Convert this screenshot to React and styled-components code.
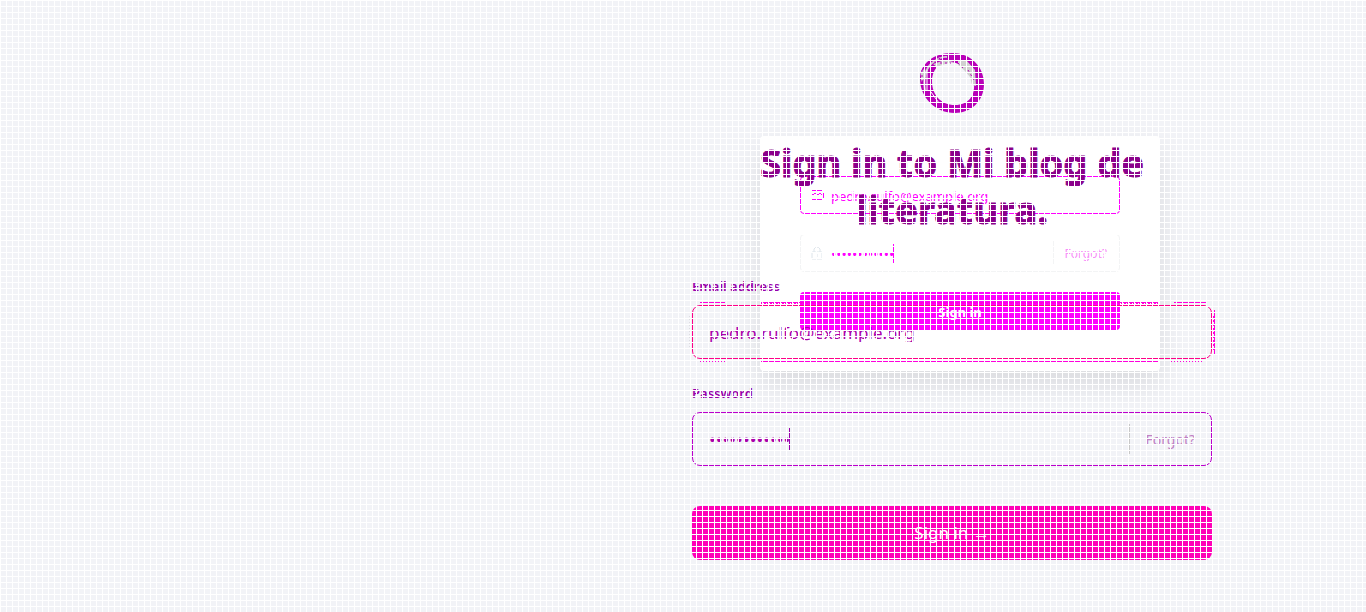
import React from 'react';
import styled, { createGlobalStyle } from 'styled-components';

const Global = createGlobalStyle`
  * { box-sizing: border-box; }
  body { margin: 0; background: #f2f3f7; font-family: "Noto Sans", sans-serif; }
  button, input { font-family: inherit; margin: 0; }
`;

const Page = styled.main`
  position: relative;
  display: grid;
  grid-template-columns: 13fr 20fr;
  min-height: 100vh;
  overflow: hidden;
`;

const Mesh = styled.div`
  position: absolute;
  inset: 0;
  z-index: 5;
  pointer-events: none;
  background:
    repeating-linear-gradient(to right, #fff 0 1px, transparent 1px 6px),
    repeating-linear-gradient(to bottom, #fff 0 1px, transparent 1px 6px);
`;

const Panel = styled.section`
  grid-column: 2;
  position: relative;
  display: flex;
  flex-direction: column;
  align-items: center;
  padding: 52px 24px;
`;

const Logo = styled.svg`
  display: block;
  width: 66px;
  height: 62px;
`;

const Preview = styled.form`
  position: absolute;
  top: 136px;
  left: 50%;
  width: 400px;
  margin-left: -192px;
  padding: 40px 40px 41px;
  display: flex;
  flex-direction: column;
  gap: 20px;
  background: #fff;
  border-radius: 4px;
  box-shadow: 0 14px 28px rgba(0, 0, 0, 0.1);
`;

const PreviewField = styled.div`
  display: flex;
  align-items: center;
  height: 38px;
  padding: 0 12px 0 10px;
  border: 1px solid ${p => (p.$active ? '#f0f' : '#f3f4f5')};
  border-radius: 4px;
  svg { flex: none; width: 14px; height: 14px; margin-right: 6px; }
`;

const Input = styled.input`
  width: ${p => p.$width || 'auto'};
  flex: ${p => (p.$width ? 'none' : '1')};
  min-width: 0;
  padding: ${p => (p.$small ? '2px 0 0' : '0')};
  border: 0;
  outline: 0;
  background: transparent;
  color: ${p => (p.$small ? '#f0f' : '#a0a')};
  font-size: ${p => (p.$small ? '13px' : '17px')};
  &[type='password'] { font-size: ${p => (p.$small ? '14px' : '18px')}; }
`;

const Caret = styled.span`
  width: 1px;
  height: ${p => (p.$small ? '19px' : '23px')};
  background: ${p => (p.$small ? '#f0f' : '#90a')};
`;

const Forgot = styled.a`
  display: flex;
  align-items: center;
  margin-left: auto;
  height: ${p => (p.$small ? '24px' : '30px')};
  padding-left: ${p => (p.$small ? '11px' : '15px')};
  border-left: 1px solid ${p => (p.$small ? '#f3f4f5' : '#c8c8c8')};
  color: ${p => (p.$small ? '#f890f8' : '#c080c4')};
  font-size: ${p => (p.$small ? '12px' : '14px')};
  text-decoration: none;
`;

const PreviewButton = styled.button`
  height: 38px;
  padding: 2px 0 0;
  border: 0;
  border-radius: 4px;
  background: #f0f;
  color: #fff;
  font-size: 13px;
  font-weight: 700;
`;

const Form = styled.form`
  position: relative;
  z-index: 2;
  width: 100%;
  max-width: 520px;
  display: flex;
  flex-direction: column;
`;

const Title = styled.h1`
  margin: 25px 0 43px;
  color: #8b008b;
  font-size: 38px;
  line-height: 47px;
  font-weight: 700;
  text-align: center;
  -webkit-text-stroke: 1px #8b008b;
`;

const Label = styled.label`
  margin-bottom: 9px;
  color: #90a;
  font-size: 13px;
  line-height: 20px;
  font-weight: 600;
`;

const Field = styled.div`
  position: relative;
  display: flex;
  align-items: center;
  height: 54px;
  margin-bottom: ${p => (p.$focus ? '24px' : '40px')};
  padding: 0 16px;
  border: 1px solid ${p => (p.$focus ? '#f08' : '#b0c')};
  border-radius: 8px;
`;

const FocusGlow = styled.span`
  position: absolute;
  inset: -4px;
  pointer-events: none;
  background:
    linear-gradient(to right, transparent 11px, #f0d 11px 36px, transparent 36px 72px, #f0d 72px 469px, transparent 469px 485px, #f0d 485px 517px, transparent 517px) top / 100% 1px no-repeat,
    linear-gradient(#f0d, #f0d) 72px 100% / 397px 1px no-repeat,
    repeating-linear-gradient(to right, #f0d 0 1px, transparent 1px 3px) 11px 100% / 25px 1px no-repeat,
    repeating-linear-gradient(to right, #f0d 0 1px, transparent 1px 3px) 482px 100% / 32px 1px no-repeat,
    repeating-linear-gradient(to right, #f0d 0 2px, transparent 2px 3px) 72px 1px / 397px 1px no-repeat,
    linear-gradient(to bottom, #f0d, #f0d) 525px 8px / 1px 44px no-repeat,
    repeating-linear-gradient(to bottom, #f0d 0 2px, transparent 2px 4px) 524px 14px / 1px 36px no-repeat,
    repeating-linear-gradient(to bottom, #dddde2 0 1px, transparent 1px 3px) 0 14px / 1px 32px no-repeat;
`;

const Submit = styled.button`
  height: 54px;
  padding: 0 0 2px;
  border: 0;
  border-radius: 8px;
  background: #ff00b8;
  color: #fff;
  font-size: 17px;
`;

export default function App() {
  return (
    <Page>
      <Global />
      <Panel>
        <Logo viewBox="0 0 66 62" aria-hidden="true">
          <path fillRule="evenodd" fill="#b800b8" d="M33 1C51 1 65 14 65 32C65 49 52 61 36 61C16 61 1 45 1 27C1 12 14 1 33 1ZM32 10C20 9 13 18 13 29C13 43 22 53 36 53C50 53 56 43 55 32C50 19 43 11 32 10Z" />
          <path fill="none" stroke="#d4c8d4" strokeWidth="2" d="M6 39Q3 20 13 11Q22 4 28 5" />
          <path fill="#d0d0d0" d="M39 8L48 9L56 18L57 34L53 33L51 25L45 18L39 13ZM2 20L6 16L7 25L2 30ZM14 12L26 8L35 10L26 12L18 15Z" />
          <path fill="none" stroke="#b800b8" strokeDasharray="2 3" d="M3 18L3 32M15 9L24 5M21 11H32M39 11L44 16M49 18L55 28" />
          <path fill="none" stroke="#fff" strokeWidth="1" d="M8 18V38M12 40L20 51" />
        </Logo>
        <Preview>
          <PreviewField $active>
            <svg viewBox="0 0 14 14" fill="none" stroke="#f0f"><path d="M1 2.500H11M1 11.500H11M1 6.500H3M3 5.500H5M5 6.500H8M8 5.500H10M10 6.500H11M12.500 4V10" /></svg>
            <Input $small type="email" aria-label="Preview email" defaultValue="pedro.rulfo@example.org" />
          </PreviewField>
          <PreviewField>
            <svg viewBox="0 0 14 14" fill="none" stroke="#dde4ea"><path d="M3 6V3Q6 -1 9 3V6M1 6H11V13H1ZM6 8V11" /></svg>
            <Input $small $width="62px" type="password" aria-label="Preview password" defaultValue="abcdefghijkl" />
            <Caret $small />
            <Forgot $small href="#forgot">Forgot?</Forgot>
          </PreviewField>
          <PreviewButton type="button">Sign in</PreviewButton>
        </Preview>
        <Form>
          <Title>Sign in to Mi blog de literatura.</Title>
          <Label htmlFor="email">Email address</Label>
          <Field $focus>
            <Input id="email" type="email" defaultValue="pedro.rulfo@example.org" />
            <FocusGlow />
          </Field>
          <Label htmlFor="password">Password</Label>
          <Field>
            <Input id="password" $width="80px" type="password" defaultValue="abcdefghijkl" />
            <Caret />
            <Forgot href="#forgot">Forgot?</Forgot>
          </Field>
          <Submit type="button">Sign in →</Submit>
        </Form>
      </Panel>
      <Mesh />
    </Page>
  );
}
